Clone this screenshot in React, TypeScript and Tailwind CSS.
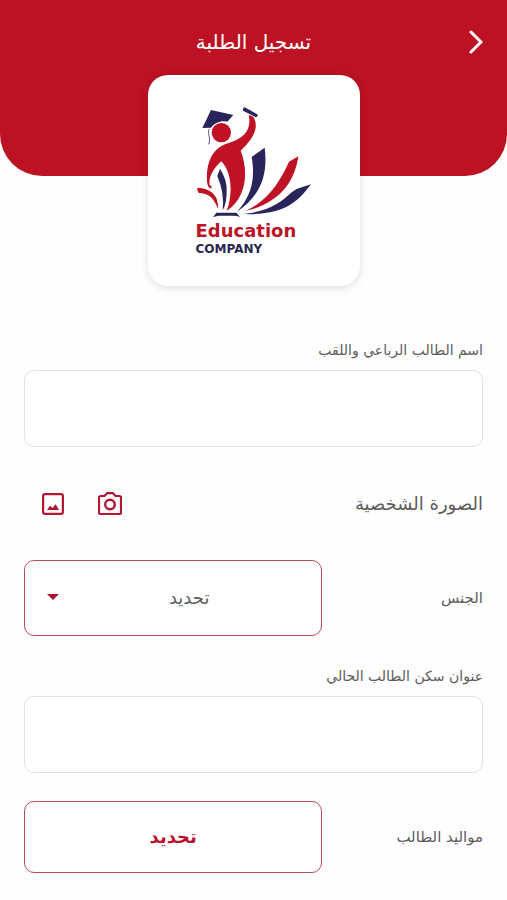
import type { ReactNode } from "react";

const App = () => (
  <div
    dir="rtl"
    className="min-h-screen bg-[#fefefe] pb-7 font-['DejaVu_Sans',sans-serif] text-[#5c5c5c]"
  >
    <Header />
    <Logo />
    <form className="mt-[52px] flex flex-col px-6">
      <TextField id="name" label="اسم الطالب الرباعي واللقب" />
      <div className="mt-[35px] flex h-11 items-center justify-between">
        <span className="text-lg">الصورة الشخصية</span>
        <div className="flex gap-2 pl-1">
          <IconButton label="الكاميرا">
            <CameraIcon />
          </IconButton>
          <IconButton label="معرض الصور">
            <PictureIcon />
          </IconButton>
        </div>
      </div>
      <div className="mt-[34px] flex items-center justify-between">
        <label htmlFor="gender" className="text-[15px]">
          الجنس
        </label>
        <div className="relative w-[65%]">
          <select
            id="gender"
            className="h-[76px] w-full appearance-none rounded-[10px] border border-[#bb4a5c] bg-white pl-8 text-center text-lg [text-align-last:center]"
          >
            <option>تحديد</option>
          </select>
          <svg
            viewBox="0 0 12 6"
            className="pointer-events-none absolute top-[34px] left-[23px] h-[6px] w-3 fill-[#ae1230]"
          >
            <path d="M0 0h12L6 6z" />
          </svg>
        </div>
      </div>
      <div className="mt-7">
        <TextField id="address" label="عنوان سكن الطالب الحالي" />
      </div>
      <div className="mt-7 flex items-center justify-between">
        <label htmlFor="birth" className="text-[15px]">
          مواليد الطالب
        </label>
        <button
          id="birth"
          type="button"
          className="h-[72px] w-[65%] rounded-[10px] border border-[#bb4a5c] bg-white text-lg font-bold text-[#bb1230]"
        >
          تحديد
        </button>
      </div>
    </form>
  </div>
);

const Header = () => (
  <header className="grid h-44 grid-cols-[1fr_auto_1fr] items-start rounded-b-[42px] bg-[#bc1223] px-6 pt-6 text-white">
    <button type="button" aria-label="رجوع" className="flex h-9 w-6 items-center">
      <svg viewBox="0 0 16 24" className="h-6 w-4" fill="none">
        <path
          d="M4 2 14 12 4 22"
          stroke="currentColor"
          strokeWidth="3"
          strokeLinecap="round"
        />
      </svg>
    </button>
    <h1 className="text-xl leading-9">تسجيل الطلبة</h1>
  </header>
);

const Logo = () => (
  <div
    dir="ltr"
    className="relative mx-auto -mt-[101px] flex h-[211px] w-[212px] flex-col rounded-[20px] bg-white pt-8 pl-12 shadow-[0_2px_8px_rgba(0,0,0,0.13)]"
  >
    <svg viewBox="168 126 354 342" className="h-[114px] w-[118px] overflow-visible">
      <g fill="#29245a">
        <path d="M213 135 280 150 262 170C245 165 223 173 213 188L187 189Z" />
        <path d="M314 127 352 148Q355 155 348 157L309 137Q307 129 314 127Z" />
        <path d="M335 276 374 248C382 311 374 385 291 440C326 402 349 355 335 276Z" />
        <path d="M513 358C470 415 430 452 305 447C385 440 420 415 455 382Q470 370 485 367Z" />
        <path d="M240 311Q262 345 260 380Q260 415 248 436Q254 385 232 333Z" />
        <path d="M229 443H289L300 456Q290 452 280 452H238Q228 452 219 457Z" />
      </g>
      <path
        d="M208 192C199 205 215 216 206 238"
        fill="none"
        stroke="#55527b"
        strokeWidth="3"
      />
      <g fill="#c01225">
        <circle cx="244" cy="203" r="29" />
        <path d="M326 149 340 155C362 193 330 229 302 257C326 318 321 398 260 438C277 393 279 326 244 289C222 308 205 335 209 361Q217 362 214 370Q204 371 201 350C199 310 206 251 266 234C315 217 335 194 326 149Z" />
        <path d="M475 274C465 345 425 412 318 438C386 404 420 350 447 290Z" />
        <path d="M172 368C212 370 237 391 234 431C221 399 206 384 176 384Q170 376 172 368Z" />
      </g>
    </svg>
    <p className="text-lg leading-5 font-bold text-[#bd1428]">Education</p>
    <p className="text-xs leading-4 font-bold text-[#28264f]">COMPANY</p>
  </div>
);

const TextField = (props: { id: string; label: string }) => (
  <div className="flex flex-col">
    <label htmlFor={props.id} className="text-sm leading-6">
      {props.label}
    </label>
    <input
      id={props.id}
      type="text"
      className="mt-2 h-[77px] w-full rounded-[10px] border border-[#e0e0e0] bg-white px-4"
    />
  </div>
);

const IconButton = (props: { label: string; children: ReactNode }) => (
  <button
    type="button"
    aria-label={props.label}
    className="flex h-11 w-[49px] items-center justify-center text-[#b21732]"
  >
    {props.children}
  </button>
);

const CameraIcon = () => (
  <svg viewBox="0 0 24 24" className="size-6" fill="none">
    <path
      d="M2.500 4H6.500L9 1.200H15L17.500 4H21.500Q23 4 23 5.500V20.500Q23 22 21.500 22H2.500Q1 22 1 20.500V5.500Q1 4 2.500 4Z"
      stroke="currentColor"
      strokeWidth="2.200"
      strokeLinejoin="round"
    />
    <circle cx="12" cy="12.500" r="4.800" stroke="currentColor" strokeWidth="2.400" />
  </svg>
);

const PictureIcon = () => (
  <svg viewBox="0 0 22 22" className="size-[22px]" fill="none">
    <rect
      x="1.100"
      y="1.100"
      width="19.800"
      height="19.800"
      rx="1.800"
      stroke="currentColor"
      strokeWidth="2.200"
    />
    <path d="M5 17 8 12.800 10.500 15 13.700 11.300 17 17Z" fill="currentColor" />
  </svg>
);

export default App;
